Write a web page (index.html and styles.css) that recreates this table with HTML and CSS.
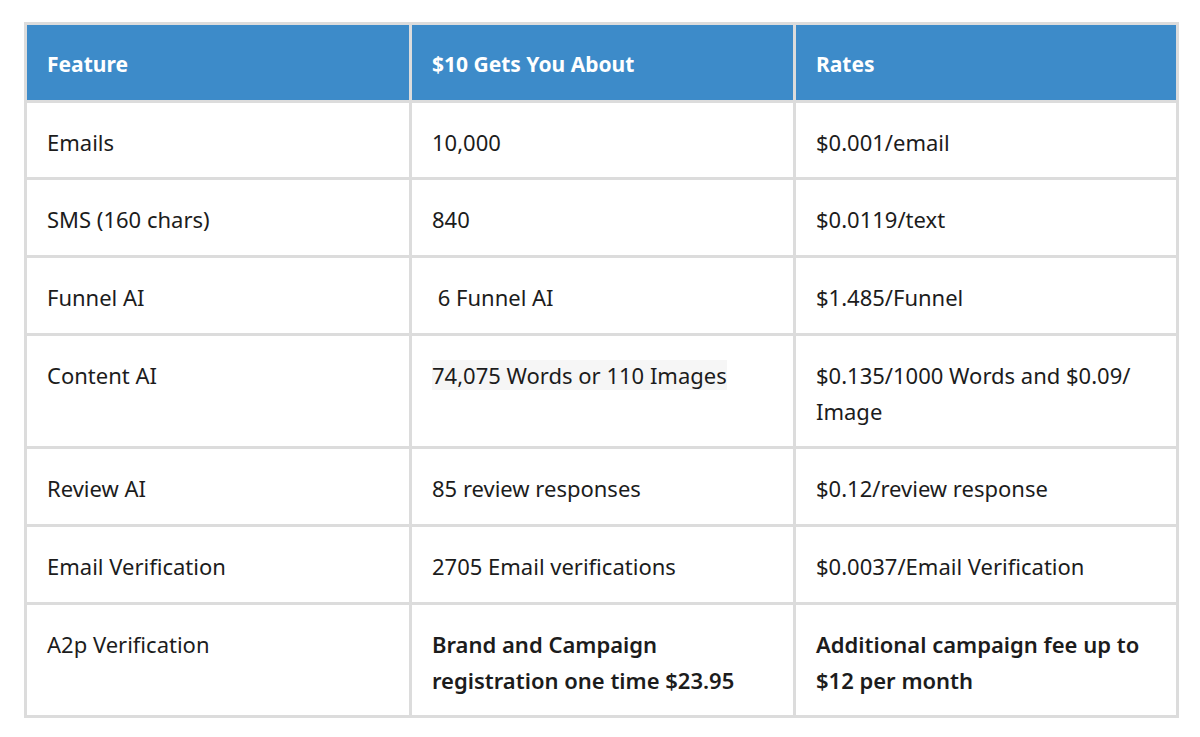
FILE: index.html
```html
<!DOCTYPE html>
<html>
<head>
<meta charset="utf-8">
<link rel="stylesheet" href="styles.css">
</head>
<body>
<table class="pricing">
  <colgroup>
    <col class="c1"><col class="c2"><col class="c3">
  </colgroup>
  <thead>
    <tr><th>Feature</th><th>$10 Gets You About</th><th>Rates</th></tr>
  </thead>
  <tbody>
    <tr><td>Emails</td><td>10,000</td><td>$0.001/email</td></tr>
    <tr><td>SMS (160 chars)</td><td>840</td><td>$0.0119/text</td></tr>
    <tr><td>Funnel AI</td><td>&nbsp;6 Funnel AI</td><td>$1.485/Funnel</td></tr>
    <tr><td>Content AI</td><td><span class="hl">74,075 Words or 110 Images</span></td><td>$0.135/1000 Words and $0.09/<wbr>Image</td></tr>
    <tr><td>Review AI</td><td>85 review responses</td><td>$0.12/review response</td></tr>
    <tr><td>Email Verification</td><td>2705 Email verifications</td><td>$0.0037/Email Verification</td></tr>
    <tr><td>A2p Verification</td><td class="strong">Brand and Campaign registration one time $23.95</td><td class="strong">Additional campaign fee up to $12 per month</td></tr>
  </tbody>
</table>
</body>
</html>
```
FILE: styles.css
```css
html, body {
  margin: 0;
  padding: 0;
  background: #ffffff;
}
body {
  padding: 22px 0 0 24px;
  font-family: "Noto Sans", "Open Sans", sans-serif;
  color: #1c1c1c;
}
.pricing {
  border-collapse: collapse;
  table-layout: fixed;
  width: 1152px;
  border: 3px solid #dcdcdc;
}
.c1 { width: 385px; }
.c2 { width: 384px; }
.c3 { width: 383px; }
.pricing th, .pricing td {
  border: 3px solid #dcdcdc;
  text-align: left;
  vertical-align: top;
  font-size: 22px;
  line-height: 36px;
  padding: 21px 20px 17.7px 20px;
}
.pricing th {
  background: #3d8bc9;
  color: #ffffff;
  font-size: 21px;
  font-weight: 700;
  padding-top: 20.5px;
  padding-bottom: 18px;
}
.pricing td.strong {
  font-weight: 600;
}
.hl {
  background: #f6f6f6;
}
```
